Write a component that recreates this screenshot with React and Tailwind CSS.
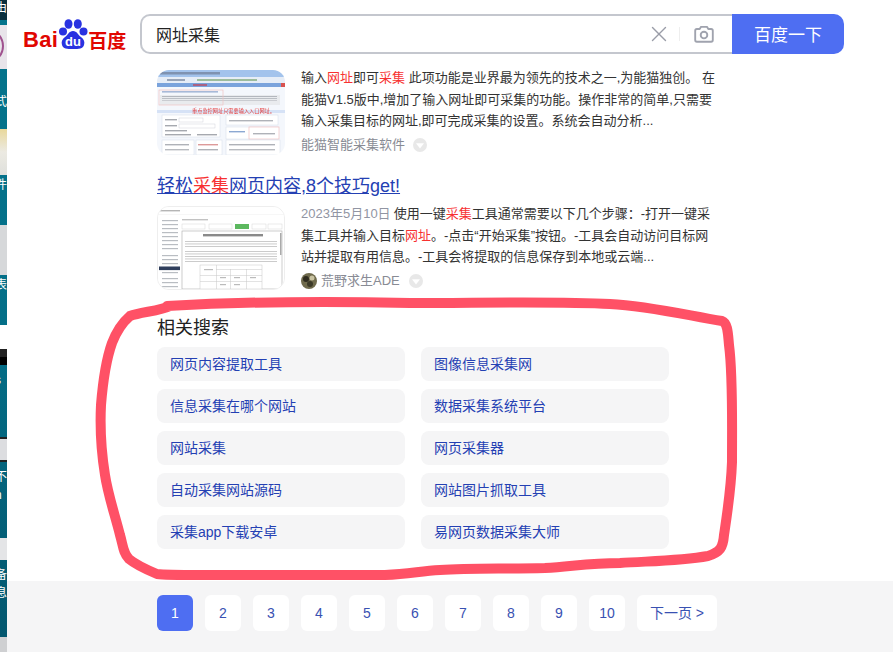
import { X } from "lucide-react";

const FONT = "[font-family:'Liberation_Sans','Noto_Sans_CJK_SC',sans-serif]";

const STRIP = [
  { h: 20, cls: "bg-[#0b2f3d]", text: "由" },
  { h: 5, cls: "" },
  { h: 44, cls: "bg-[#e8e4ea]", disc: true },
  { h: 25, cls: "" },
  { h: 16, cls: "", text: "式" },
  { h: 19, cls: "" },
  { h: 46, cls: "bg-gradient-to-b from-[#e9d89a] via-[#eceae2] to-[#dfe0dc]" },
  { h: 2, cls: "" },
  { h: 16, cls: "", text: "件" },
  { h: 32, cls: "" },
  { h: 50, cls: "bg-[#d6d8da]" },
  { h: 2, cls: "" },
  { h: 16, cls: "", text: "表" },
  { h: 32, cls: "" },
  { h: 24, cls: "bg-white" },
  { h: 8, cls: "bg-[#222]" },
  { h: 8, cls: "bg-black" },
  { h: 7, cls: "" },
  { h: 14, cls: "", text: "s" },
  { h: 51, cls: "" },
  { h: 2, cls: "bg-[#222]" },
  { h: 21, cls: "bg-[#dcdde0]" },
  { h: 2, cls: "bg-[#222]" },
  { h: 7, cls: "" },
  { h: 16, cls: "", text: "不" },
  { h: 2, cls: "" },
  { h: 14, cls: "", text: "n" },
  { h: 37, cls: "" },
  { h: 22, cls: "bg-[#e4e5e7]" },
  { h: 7, cls: "" },
  { h: 16, cls: "", text: "备" },
  { h: 2, cls: "" },
  { h: 16, cls: "", text: "息" },
  { h: 36, cls: "" },
  { h: 15, cls: "bg-[#cfd0d2]" },
];

const RELATED = [
  "网页内容提取工具", "图像信息采集网",
  "信息采集在哪个网站", "数据采集系统平台",
  "网站采集", "网页采集器",
  "自动采集网站源码", "网站图片抓取工具",
  "采集app下载安卓", "易网页数据采集大师",
];

function DesktopStrip() {
  return (
    <div className="w-[7px] h-full shrink-0 overflow-hidden flex flex-col bg-gradient-to-b from-[#04748c] via-[#046f88] to-[#03566e]">
      {STRIP.map((s, i) => (
        <div key={i} style={{ height: s.h }} className={`shrink-0 overflow-hidden relative ${s.cls}`}>
          {s.disc && <div className="w-[36px] h-[36px] rounded-full border-2 border-[#a0528f] ml-[-32px] mt-[3px]" />}
          {s.text && <div className="ml-[-5px] text-[12px] leading-[16px] text-white whitespace-nowrap">{s.text}</div>}
        </div>
      ))}
    </div>
  );
}

function Logo() {
  return (
    <div className="w-[117px] h-[40px] shrink-0 flex items-end pb-[4px]">
      <span className="text-[22px] leading-[20px] font-bold text-[#e10601] tracking-[0.3px] [font-family:'Liberation_Sans',sans-serif]">Bai</span>
      <svg width="30" height="32" viewBox="0 0 30 32" className="shrink-0 mb-[-1px]">
        <circle cx="5" cy="12.5" r="4" fill="#2932e1" />
        <ellipse cx="10.5" cy="5" rx="4" ry="4.8" fill="#2932e1" />
        <ellipse cx="19.8" cy="5" rx="4" ry="4.8" fill="#2932e1" />
        <circle cx="25.5" cy="12.5" r="4" fill="#2932e1" />
        <path d="M15 12c4 0 5 4 8 6 3 2 4 5 3 8-1 4-5 4-11 4s-10 0-11-4c-1-3 0-6 3-8 3-2 4-6 8-6z" fill="#2932e1" />
        <text x="15" y="27" textAnchor="middle" fontSize="13" fontWeight="700" fill="#fff" fontFamily="Liberation Sans">du</text>
      </svg>
      <span className="text-[19px] leading-[20px] font-bold text-[#e10601] [font-family:'Noto_Sans_CJK_SC',sans-serif]">百度</span>
    </div>
  );
}

function Camera() {
  return (
    <svg width="22" height="22" viewBox="0 0 20 20" fill="none" stroke="#a0a3ae" strokeWidth="1.7">
      <path d="M3.5 5.5h2.6l1.2-2h5.4l1.2 2h2.6a1.5 1.5 0 0 1 1.5 1.5v8.5a1.5 1.5 0 0 1-1.5 1.5h-13A1.5 1.5 0 0 1 2 15.5V7a1.5 1.5 0 0 1 1.5-1.5z" strokeLinejoin="round" />
      <circle cx="10" cy="11" r="3" />
    </svg>
  );
}

function SearchBar() {
  return (
    <div className="flex w-[704px] h-[40px]">
      <div className="flex-1 flex items-center border-2 border-r-0 border-[#c4c7ce] rounded-l-[10px] pl-[14px] bg-white">
        <span className="flex-1 text-[16px] text-[#222] pt-[3px]">网址采集</span>
        <X size={26} strokeWidth={1.3} className="text-[#9a9da8]" />
        <div className="w-px h-[14px] bg-[#eeeeee] ml-[7px] mr-[13px]" />
        <Camera />
        <div className="w-[17px]" />
      </div>
      <div className="w-[112px] flex items-center justify-center bg-[#4e6ef2] rounded-r-[10px] text-[17px] text-white pt-[3px]">百度一下</div>
    </div>
  );
}

function Thumb1() {
  return (
    <div className="w-[128px] h-[85px] shrink-0 rounded-xl overflow-hidden">
      <svg width="128" height="85" viewBox="0 0 128 85" className="blur-[0.5px]">
        <rect width="128" height="85" fill="#f4f7fc" />
        <rect width="128" height="7" fill="#a3c3ec" />
        <rect x="3" y="2" width="60" height="2.5" fill="#7f92b0" />
        <rect y="7" width="128" height="6" fill="#e6edf7" />
        <rect x="10" y="9" width="18" height="2" fill="#98a4b8" />
        <rect x="40" y="9" width="20" height="2" fill="#9cbc9c" />
        <rect x="60" y="9" width="20" height="2" fill="#9cbc9c" />
        <rect x="80" y="9" width="20" height="2" fill="#9cbc9c" />
        <rect y="13" width="128" height="4" fill="#7aa3dc" />
        <rect x="124" y="13" width="4" height="4" fill="#d9534f" />
        <rect x="36" y="14.5" width="14" height="1" fill="#d9232a" />
        <rect x="3" y="25" width="120" height="10" fill="#e9ebee" />
        <rect x="5" y="26" width="115" height="0.8" fill="#a6aab2" />
        <rect x="5" y="28" width="115" height="0.8" fill="#b0b4bb" />
        <rect x="5" y="30" width="115" height="0.8" fill="#c2c5ca" />
        <rect x="2" y="20" width="64" height="15" fill="none" stroke="#f0c2c2" strokeWidth="0.7" />
        <rect x="5" y="21" width="56" height="1.6" fill="#a7b9d8" />
        <rect y="40" width="128" height="3" fill="#d6e2f6" />
        <text x="35" y="43" fontSize="5.2" fill="#e33b3b" fontFamily="Noto Sans CJK SC">重点监控网址只需要输入入口网址。</text>
        <rect x="5" y="45" width="58" height="22" fill="#fff" stroke="#d4dce8" strokeWidth="0.5" />
        <rect x="8" y="49" width="12" height="1.4" fill="#a6a9af" /><rect x="22" y="48" width="24" height="4" fill="#fff" stroke="#c5c8d2" strokeWidth="0.4" />
        <rect x="8" y="55" width="12" height="1.4" fill="#a6a9af" /><rect x="22" y="54" width="36" height="4" fill="#fff" stroke="#c5c8d2" strokeWidth="0.4" />
        <rect x="8" y="60" width="22" height="1.4" fill="#a6a9af" />
        <rect x="8" y="64" width="26" height="1.4" fill="#a6a9af" /><rect x="40" y="64" width="20" height="1.4" fill="#a6a9af" />
        <rect x="69" y="45" width="52" height="10" fill="#fff" stroke="#d4dce8" strokeWidth="0.5" />
        <rect x="72" y="50" width="44" height="1.4" fill="#afb2b8" />
        <rect x="69" y="57" width="52" height="12" fill="#fff" stroke="#d4dce8" strokeWidth="0.5" />
        <rect x="92" y="57" width="30" height="12" fill="#fff" stroke="#f0c2c2" strokeWidth="0.7" />
        <rect x="72" y="61" width="16" height="1.4" fill="#8ca8d2" /><rect x="96" y="63" width="22" height="1.4" fill="#afb2b8" />
        <rect x="5" y="70" width="32" height="15" fill="#fff" stroke="#d4dce8" strokeWidth="0.5" />
        <rect x="8" y="74" width="24" height="1.4" fill="#afb2b8" /><rect x="8" y="79" width="24" height="1.4" fill="#b8bbc0" />
        <rect x="39" y="70" width="26" height="15" fill="#fff" stroke="#d4dce8" strokeWidth="0.5" />
        <rect x="41" y="74" width="20" height="1.4" fill="#dd9a9a" /><rect x="41" y="79" width="20" height="1.4" fill="#afb2b8" />
        <rect x="69" y="70" width="54" height="15" fill="#fff" stroke="#d4dce8" strokeWidth="0.5" />
        <rect x="72" y="74" width="46" height="1.4" fill="#afb2b8" /><rect x="72" y="79" width="46" height="1.4" fill="#b8bbc0" />
      </svg>
    </div>
  );
}

function Thumb2() {
  const nav = [13, 17, 21, 25, 29, 33, 37, 41, 48, 52, 56, 65, 71, 75, 79];
  const lines = [34, 36.5, 39, 44, 46.5, 49, 51.5, 54];
  return (
    <div className="w-[128px] h-[84px] shrink-0 rounded-xl overflow-hidden border border-[#eeeeee]">
      <svg width="126" height="82" viewBox="0 0 126 82" className="blur-[0.4px]">
        <rect width="126" height="82" fill="#fff" />
        <rect x="2" y="3" width="20" height="1.4" fill="#b5b5b5" />
        <rect y="7" width="126" height="0.5" fill="#efefef" />
        {nav.map((y) => (
          <rect key={y} x="4" y={y} width="16" height="1.2" fill="#b9bdc2" />
        ))}
        <rect x="1" y="59.5" width="21" height="3.6" fill="#2f3e5c" />
        <rect x="24" y="12" width="26" height="1.4" fill="#c2c2c2" />
        <rect x="24" y="17" width="23" height="5" fill="#fff" stroke="#d6d6d6" strokeWidth="0.5" />
        <rect x="51" y="17" width="23" height="5" fill="#fff" stroke="#d6d6d6" strokeWidth="0.5" />
        <rect x="77" y="17" width="14" height="5" fill="#5cb85f" />
        <rect x="94" y="17" width="14" height="5" fill="#fff" stroke="#d6d6d6" strokeWidth="0.5" />
        <rect x="110" y="17" width="14" height="5" fill="#fff" stroke="#d6d6d6" strokeWidth="0.5" />
        <rect x="24" y="24" width="100" height="58" fill="#fff" stroke="#aaa" strokeWidth="0.6" />
        <rect x="45" y="27" width="60" height="2.4" fill="#8a8a8a" />
        {lines.map((y) => (
          <rect key={y} x="27" y={y} width="92" height="0.9" fill="#c6c6c6" />
        ))}
        <rect x="42" y="58" width="62" height="24" fill="#fff" stroke="#c6c6c6" strokeWidth="0.5" />
        <rect x="58" y="62" width="46" height="0.5" fill="#c6c6c6" />
        <rect x="42" y="68" width="62" height="0.5" fill="#c6c6c6" />
        <rect x="42" y="74" width="62" height="0.5" fill="#c6c6c6" />
        <rect x="58" y="58" width="0.5" height="24" fill="#c6c6c6" />
        <rect x="72" y="62" width="0.5" height="20" fill="#c6c6c6" />
        <rect x="88" y="62" width="0.5" height="20" fill="#c6c6c6" />
        <rect x="46" y="62" width="9" height="1.2" fill="#bbb" /><rect x="62" y="70" width="6" height="1.2" fill="#bbb" />
        <rect x="76" y="70" width="6" height="1.2" fill="#bbb" /><rect x="92" y="70" width="6" height="1.2" fill="#bbb" />
        <rect x="62" y="77" width="6" height="1.2" fill="#bbb" /><rect x="76" y="77" width="6" height="1.2" fill="#bbb" />
        <rect x="122" y="26" width="1.5" height="22" fill="#aaa" />
      </svg>
    </div>
  );
}

function Caret({ className }) {
  return (
    <svg width="14" height="14" viewBox="0 0 14 14" className={`shrink-0 ${className}`}>
      <circle cx="7" cy="7" r="7" fill="#e8e8e8" />
      <path d="M3 5.2h8L7 10.4z" fill="#fff" />
    </svg>
  );
}

function Em({ children }) {
  return <span className="text-[#f73131]">{children}</span>;
}

function Results() {
  return (
    <div>
      <div className="flex gap-[16px] mt-[16px]">
        <Thumb1 />
        <div className="w-[416px] h-[85px]">
          <p className="text-[13px] leading-[21.5px] text-[#333] mt-[-3px]">
            输入<Em>网址</Em>即可<Em>采集</Em> 此项功能是业界最为领先的技术之一,为能猫独创。 在能猫V1.5版中,增加了输入网址即可采集的功能。操作非常的简单,只需要输入采集目标的网址,即可完成采集的设置。系统会自动分析...
          </p>
          <div className="flex items-center h-[22px] mt-[2px] text-[13px] text-[#888b94]">
            能猫智能采集软件
            <Caret className="ml-[8px]" />
          </div>
        </div>
      </div>

      <h3 className="mt-[20px] text-[18px] leading-[22px] text-[#2440b3] underline">
        轻松<Em>采集</Em>网页内容,8个技巧get!
      </h3>
      <div className="flex gap-[16px] mt-[9px]">
        <Thumb2 />
        <div className="w-[416px] h-[84px]">
          <p className="text-[13px] leading-[21.5px] text-[#333] mt-[-3px]">
            <span className="text-[#9195a3] mr-[3px]">2023年5月10日</span>
            使用一键<Em>采集</Em>工具通常需要以下几个步骤：-打开一键采集工具并输入目标<Em>网址</Em>。-点击“开始采集”按钮。-工具会自动访问目标网站并提取有用信息。-工具会将提取的信息保存到本地或云端...
          </p>
          <div className="flex items-center h-[22px] mt-[2px] text-[13px] text-[#888b94]">
            <svg width="16" height="16" viewBox="0 0 16 16" className="shrink-0 mr-[4px]">
              <circle cx="8" cy="8" r="8" fill="#6f6a4c" />
              <circle cx="5" cy="6" r="3" fill="#2f2c1f" />
              <circle cx="11" cy="5" r="2.5" fill="#c9c3a2" />
              <circle cx="9" cy="11" r="3" fill="#3c3a28" />
            </svg>
            荒野求生ADE
            <Caret className="ml-[9px]" />
          </div>
        </div>
      </div>
    </div>
  );
}

function Related() {
  return (
    <div className="mt-[26px]">
      <h3 className="text-[18px] leading-[24px] text-[#222]">相关搜索</h3>
      <div className="grid grid-cols-[248px_248px] gap-x-[16px] gap-y-[8px] mt-[7px]">
        {RELATED.map((t) => (
          <div key={t} className="h-[34px] flex items-center px-[13px] rounded-lg bg-[#f5f5f6] text-[14px] text-[#2440b3]">
            {t}
          </div>
        ))}
      </div>
    </div>
  );
}

function Pager() {
  const pages = [1, 2, 3, 4, 5, 6, 7, 8, 9, 10];
  return (
    <div className="flex-1 mt-[32px] bg-[#f5f5f6] pt-[14px] pl-[150px] flex items-start gap-[12px]">
      {pages.map((p) => (
        <div
          key={p}
          className={`w-[36px] h-[36px] flex items-center justify-center rounded-md text-[14px] ${
            p === 1 ? "bg-[#4e6ef2] text-white" : "bg-white text-[#3951b2]"
          }`}
        >
          {p}
        </div>
      ))}
      <div className="w-[80px] h-[36px] flex items-center justify-center rounded-md bg-white text-[14px] text-[#3951b2]">
        下一页 &gt;
      </div>
    </div>
  );
}

export default function App() {
  return (
    <div className={`relative w-[893px] h-[652px] overflow-hidden flex bg-white ${FONT}`}>
      <DesktopStrip />
      <div className="flex-1 flex flex-col min-w-0">
        <div className="flex pt-[14px] pl-[16px]">
          <Logo />
          <SearchBar />
        </div>
        <div className="pl-[150px]">
          <Results />
          <Related />
        </div>
        <Pager />
      </div>
      {/* hand drawn marker circle on top of the page */}
      <svg width="893" height="652" viewBox="0 0 893 652" className="absolute inset-0 pointer-events-none">
        <path
          d="M167 306 C240 302 330 301 410 303 C480 303 560 301 610 304 C650 306 690 316 722 321 C728 323 728 335 729 345 C733 375 732 420 732 462 C731 490 727 515 724 535 C723 548 720 552 708 556 C680 561 650 561 620 563 C590 563 575 566 545 568 C500 569 470 568 440 570 C420 571 410 574 385 575 C330 575 250 575 200 575 C175 575 165 575 157 574 C145 569 135 564 129 559 C123 553 123 545 120 535 C115 515 108 495 105 475 C101 450 100 425 101 405 C103 380 106 360 112 343 C117 330 123 322 130 316 C140 312 160 311 170 306"
          fill="none"
          stroke="#ff5166"
          strokeWidth="10"
          strokeLinecap="round"
          strokeLinejoin="round"
        />
      </svg>
    </div>
  );
}
